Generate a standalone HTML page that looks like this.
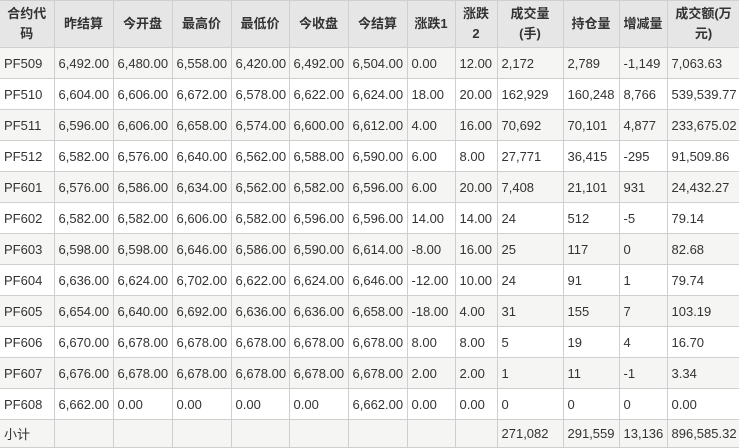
<!DOCTYPE html>
<html><head><meta charset="utf-8"><style>
body{margin:0;background:#fff;}
table{border-collapse:collapse;table-layout:fixed;width:740px;font-family:"Liberation Sans","Noto Sans CJK SC",sans-serif;font-size:13px;color:#333;}
td,th{border:1px solid #cfcfcf;padding:0 0 0 4px;white-space:nowrap;overflow:hidden;text-align:left;height:30px;}
th{background:#e6e6e6;font-weight:bold;text-align:center;height:46px;padding:0;line-height:20px;}
th:first-child{border-left:none}
td:first-child{border-left:none}
tr:nth-child(even) td{background:#f5f5f3;}
tr:nth-child(odd) td{background:#fff;}
tr.t td{height:27px;}
</style></head><body>
<table>
<colgroup><col style="width:54px"><col style="width:59px"><col style="width:59px"><col style="width:59px"><col style="width:58px"><col style="width:59px"><col style="width:59px"><col style="width:48px"><col style="width:42px"><col style="width:66px"><col style="width:56px"><col style="width:48px"><col style="width:73px"></colgroup>
<tr><th>合约代<br>码</th><th>昨结算</th><th>今开盘</th><th>最高价</th><th>最低价</th><th>今收盘</th><th>今结算</th><th>涨跌1</th><th>涨跌<br>2</th><th>成交量<br>(手)</th><th>持仓量</th><th>增减量</th><th>成交额(万<br>元)</th></tr>
<tr><td>PF509</td><td>6,492.00</td><td>6,480.00</td><td>6,558.00</td><td>6,420.00</td><td>6,492.00</td><td>6,504.00</td><td>0.00</td><td>12.00</td><td>2,172</td><td>2,789</td><td>-1,149</td><td>7,063.63</td></tr>
<tr><td>PF510</td><td>6,604.00</td><td>6,606.00</td><td>6,672.00</td><td>6,578.00</td><td>6,622.00</td><td>6,624.00</td><td>18.00</td><td>20.00</td><td>162,929</td><td>160,248</td><td>8,766</td><td>539,539.77</td></tr>
<tr><td>PF511</td><td>6,596.00</td><td>6,606.00</td><td>6,658.00</td><td>6,574.00</td><td>6,600.00</td><td>6,612.00</td><td>4.00</td><td>16.00</td><td>70,692</td><td>70,101</td><td>4,877</td><td>233,675.02</td></tr>
<tr><td>PF512</td><td>6,582.00</td><td>6,576.00</td><td>6,640.00</td><td>6,562.00</td><td>6,588.00</td><td>6,590.00</td><td>6.00</td><td>8.00</td><td>27,771</td><td>36,415</td><td>-295</td><td>91,509.86</td></tr>
<tr><td>PF601</td><td>6,576.00</td><td>6,586.00</td><td>6,634.00</td><td>6,562.00</td><td>6,582.00</td><td>6,596.00</td><td>6.00</td><td>20.00</td><td>7,408</td><td>21,101</td><td>931</td><td>24,432.27</td></tr>
<tr><td>PF602</td><td>6,582.00</td><td>6,582.00</td><td>6,606.00</td><td>6,582.00</td><td>6,596.00</td><td>6,596.00</td><td>14.00</td><td>14.00</td><td>24</td><td>512</td><td>-5</td><td>79.14</td></tr>
<tr><td>PF603</td><td>6,598.00</td><td>6,598.00</td><td>6,646.00</td><td>6,586.00</td><td>6,590.00</td><td>6,614.00</td><td>-8.00</td><td>16.00</td><td>25</td><td>117</td><td>0</td><td>82.68</td></tr>
<tr><td>PF604</td><td>6,636.00</td><td>6,624.00</td><td>6,702.00</td><td>6,622.00</td><td>6,624.00</td><td>6,646.00</td><td>-12.00</td><td>10.00</td><td>24</td><td>91</td><td>1</td><td>79.74</td></tr>
<tr><td>PF605</td><td>6,654.00</td><td>6,640.00</td><td>6,692.00</td><td>6,636.00</td><td>6,636.00</td><td>6,658.00</td><td>-18.00</td><td>4.00</td><td>31</td><td>155</td><td>7</td><td>103.19</td></tr>
<tr><td>PF606</td><td>6,670.00</td><td>6,678.00</td><td>6,678.00</td><td>6,678.00</td><td>6,678.00</td><td>6,678.00</td><td>8.00</td><td>8.00</td><td>5</td><td>19</td><td>4</td><td>16.70</td></tr>
<tr><td>PF607</td><td>6,676.00</td><td>6,678.00</td><td>6,678.00</td><td>6,678.00</td><td>6,678.00</td><td>6,678.00</td><td>2.00</td><td>2.00</td><td>1</td><td>11</td><td>-1</td><td>3.34</td></tr>
<tr><td>PF608</td><td>6,662.00</td><td>0.00</td><td>0.00</td><td>0.00</td><td>0.00</td><td>6,662.00</td><td>0.00</td><td>0.00</td><td>0</td><td>0</td><td>0</td><td>0.00</td></tr>
<tr class="t"><td>小计</td><td></td><td></td><td></td><td></td><td></td><td></td><td></td><td></td><td>271,082</td><td>291,559</td><td>13,136</td><td>896,585.32</td></tr>
</table>
</body></html>
